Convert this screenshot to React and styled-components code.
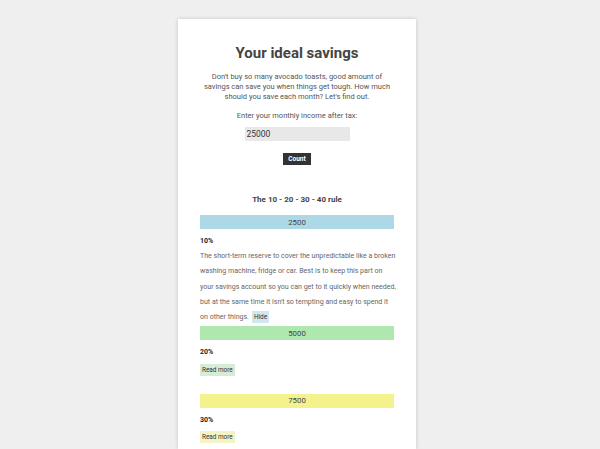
import React, { useState } from "react";
import styled, { createGlobalStyle } from "styled-components";

const GlobalStyle = createGlobalStyle`
  html, body {
    margin: 0;
    padding: 0;
    background: #efefef;
    font-family: Roboto, "Liberation Sans", sans-serif;
  }
`;

const Page = styled.div`
  display: flex;
  justify-content: center;
  padding: 19px 6px 0 0;
  height: 430px;
  overflow: hidden;
`;

const Card = styled.div`
  width: 194px;
  padding: 26px 22px 40px;
  background: #fff;
  box-shadow: 0 0 4px rgba(0, 0, 0, 0.18);
  color: #555;
`;

const Title = styled.h1`
  margin: 0;
  font-size: 15px;
  line-height: 16px;
  font-weight: 700;
  color: #444;
  text-align: center;
`;

const Intro = styled.p`
  margin: 11px 3px 0;
  font-size: 7.5px;
  line-height: 10px;
  text-align: center;
  color: #555;
`;

const Label = styled.p`
  margin: 9px 0 0;
  font-size: 7.5px;
  line-height: 10px;
  text-align: center;
`;

const Form = styled.div`
  display: flex;
  flex-direction: column;
  align-items: center;
`;

const Input = styled.input`
  box-sizing: border-box;
  width: 105px;
  height: 14px;
  margin-top: 6px;
  padding: 0 2px;
  border: none;
  background: #e8e8e8;
  font-family: Roboto, "Liberation Sans", sans-serif;
  font-size: 8.5px;
  color: #333;
  outline: none;
`;

const CountButton = styled.button`
  margin-top: 12px;
  width: 28px;
  height: 12px;
  padding: 0;
  border: none;
  background: #333;
  color: #fff;
  font-family: Roboto, "Liberation Sans", sans-serif;
  font-size: 6.5px;
  font-weight: 700;
`;

const RuleTitle = styled.h2`
  margin: 30px 0 0;
  font-size: 8px;
  line-height: 10px;
  font-weight: 700;
  text-align: center;
  color: #444;
`;

const Section = styled.div`
  margin-top: ${(p) => (p.$first ? "10px" : "0")};
  padding-bottom: ${(p) => (p.$open ? "2px" : "18px")};
`;

const Bar = styled.div`
  height: 14px;
  display: flex;
  align-items: center;
  justify-content: center;
  background: ${(p) => p.$color};
  font-size: 7.8px;
  color: #444;
`;

const Percent = styled.div`
  margin-top: 8px;
  font-size: 7px;
  line-height: 8px;
  font-weight: 700;
  color: #222;
`;

const Text = styled.p`
  margin: 3px -2px 0 0;
  font-size: 7.05px;
  line-height: 15.3px;
  color: #666;
`;

const Toggle = styled.button`
  display: inline-block;
  vertical-align: middle;
  margin: ${(p) => (p.$inline ? "0 0 0 3px" : "5px 0 0")};
  padding: 2px 2px;
  border: none;
  background: ${(p) => p.$color};
  font-family: Roboto, "Liberation Sans", sans-serif;
  font-size: 6.4px;
  line-height: 8px;
  color: #333;
`;

const items = [
  {
    pct: 10,
    color: "#add8e6",
    light: "#cfe7ef",
    text:
      "The short-term reserve to cover the unpredictable like a broken washing machine, fridge or car. Best is to keep this part on your savings account so you can get to it quickly when needed, but at the same time it isn't so tempting and easy to spend it on other things.",
  },
  { pct: 20, color: "#aee8ae", light: "#d6ecd6", text: "" },
  { pct: 30, color: "#f3f28c", light: "#f4f3c6", text: "" },
  { pct: 40, color: "#f5c28c", light: "#f5e0c6", text: "" },
];

function Rule({ item, income, first }) {
  const [open, setOpen] = useState(first);
  return (
    <Section $first={first} $open={open}>
      <Bar $color={item.color}>{(income * item.pct) / 100}</Bar>
      <Percent>{item.pct}%</Percent>
      {open ? (
        <Text>
          {item.text}
          <Toggle $inline $color={item.light} onClick={() => setOpen(false)}>
            Hide
          </Toggle>
        </Text>
      ) : (
        <Toggle $color={item.light} onClick={() => setOpen(true)}>
          Read more
        </Toggle>
      )}
    </Section>
  );
}

export default function App() {
  const [value, setValue] = useState("25000");
  const income = Number(value) || 0;
  return (
    <>
      <GlobalStyle />
      <Page>
        <Card>
          <Title>Your ideal savings</Title>
          <Intro>
            Don't buy so many avocado toasts, good amount of savings can save
            you when things get tough. How much should you save each month?
            Let's find out.
          </Intro>
          <Form>
            <Label>Enter your monthly income after tax:</Label>
            <Input value={value} onChange={(e) => setValue(e.target.value)} />
            <CountButton>Count</CountButton>
          </Form>
          <RuleTitle>The 10 - 20 - 30 - 40 rule</RuleTitle>
          {items.map((item, i) => (
            <Rule key={item.pct} item={item} income={income} first={i === 0} />
          ))}
        </Card>
      </Page>
    </>
  );
}
